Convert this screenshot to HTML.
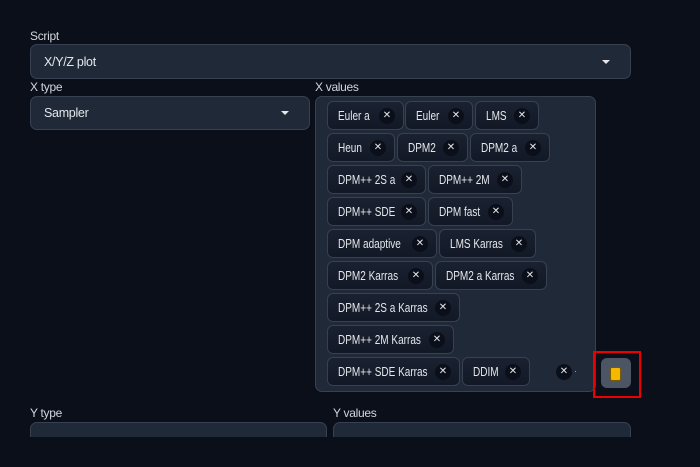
<!DOCTYPE html><html><head><style>
body{margin:0;width:700px;height:467px;background:#0b0f19;font-family:"Liberation Sans",sans-serif;color:#e5e7eb;position:relative;overflow:hidden}
.a{position:absolute}
.lbl{font-size:12px;color:#d1d5db;letter-spacing:-0.3px}
.dd{background:#1f2937;border:1px solid #374151;border-radius:7px;box-sizing:border-box;font-size:12.5px;padding-left:13px;display:flex;align-items:center;letter-spacing:-0.3px}
.tri{position:absolute;right:20px;top:50%;margin-top:-2px;border-left:4px solid transparent;border-right:4px solid transparent;border-top:4px solid #e5e7eb}
.chip{position:absolute;height:29px;box-sizing:border-box;border:1px solid #374151;border-radius:6px;background:linear-gradient(#1a2130,#121826);font-size:13px;color:#e5e7eb;white-space:nowrap;overflow:hidden}
.chip b{font-weight:normal;position:absolute;left:10px;top:6px;display:inline-block;transform:scaleX(.77);transform-origin:left center}
.x{position:absolute;right:8px;top:6px;width:16px;height:16px;border-radius:50%;background:#0b0f19;color:#e5e7eb;font-size:10px;line-height:16px;text-align:center}
</style></head><body>
<div class="a lbl" style="left:30px;top:29px">Script</div>
<div class="a dd" style="left:30px;top:44px;width:601px;height:35px">X/Y/Z plot<div class="tri"></div></div>
<div class="a lbl" style="left:30px;top:80px">X type</div>
<div class="a dd" style="left:30px;top:96px;width:280px;height:34px">Sampler<div class="tri"></div></div>
<div class="a lbl" style="left:315px;top:80px">X values</div>
<div class="a" style="left:315px;top:96px;width:281px;height:296px;background:#1f2937;border:1px solid #374151;border-radius:7px;box-sizing:border-box"></div>
<div class="chip" style="left:327px;top:101px;width:77px"><b>Euler a</b><span class="x">✕</span></div>
<div class="chip" style="left:405px;top:101px;width:68px"><b>Euler</b><span class="x">✕</span></div>
<div class="chip" style="left:475px;top:101px;width:64px"><b>LMS</b><span class="x">✕</span></div>
<div class="chip" style="left:327px;top:133px;width:68px"><b>Heun</b><span class="x">✕</span></div>
<div class="chip" style="left:397px;top:133px;width:71px"><b>DPM2</b><span class="x">✕</span></div>
<div class="chip" style="left:470px;top:133px;width:80px"><b>DPM2 a</b><span class="x">✕</span></div>
<div class="chip" style="left:327px;top:165px;width:99px"><b>DPM++ 2S a</b><span class="x">✕</span></div>
<div class="chip" style="left:428px;top:165px;width:94px"><b>DPM++ 2M</b><span class="x">✕</span></div>
<div class="chip" style="left:327px;top:197px;width:99px"><b>DPM++ SDE</b><span class="x">✕</span></div>
<div class="chip" style="left:428px;top:197px;width:85px"><b>DPM fast</b><span class="x">✕</span></div>
<div class="chip" style="left:327px;top:229px;width:110px"><b>DPM adaptive</b><span class="x">✕</span></div>
<div class="chip" style="left:439px;top:229px;width:97px"><b>LMS Karras</b><span class="x">✕</span></div>
<div class="chip" style="left:327px;top:261px;width:106px"><b>DPM2 Karras</b><span class="x">✕</span></div>
<div class="chip" style="left:435px;top:261px;width:112px"><b>DPM2 a Karras</b><span class="x">✕</span></div>
<div class="chip" style="left:327px;top:293px;width:133px"><b>DPM++ 2S a Karras</b><span class="x">✕</span></div>
<div class="chip" style="left:327px;top:325px;width:127px"><b>DPM++ 2M Karras</b><span class="x">✕</span></div>
<div class="chip" style="left:327px;top:357px;width:133px"><b>DPM++ SDE Karras</b><span class="x">✕</span></div>
<div class="chip" style="left:462px;top:357px;width:68px"><b>DDIM</b><span class="x">✕</span></div>
<div class="a" style="left:556px;top:364px;width:16px;height:16px;border-radius:50%;background:#0b0f19;font-size:10px;line-height:16px;text-align:center">✕</div>
<div class="a" style="left:575px;top:371px;width:1px;height:1px;background:#9ca3af"></div>
<div class="a" style="left:593px;top:351px;width:48px;height:47px;border:2px solid #e00;box-sizing:border-box"></div>
<div class="a" style="left:601px;top:358px;width:30px;height:30px;background:#4b5563;border-radius:6px"></div>
<div class="a" style="left:610px;top:367px;width:11px;height:14px;background:#f5b800;border:1px solid #7a5a00;border-radius:2px;box-sizing:border-box"></div>
<div class="a lbl" style="left:30px;top:406px">Y type</div>
<div class="a lbl" style="left:333px;top:406px">Y values</div>
<div class="a" style="left:30px;top:422px;width:297px;height:15px;background:#1f2937;border:1px solid #374151;border-bottom:none;border-radius:7px 7px 0 0;box-sizing:border-box"></div>
<div class="a" style="left:333px;top:422px;width:298px;height:15px;background:#1f2937;border:1px solid #374151;border-bottom:none;border-radius:7px 7px 0 0;box-sizing:border-box"></div>
</body></html>
